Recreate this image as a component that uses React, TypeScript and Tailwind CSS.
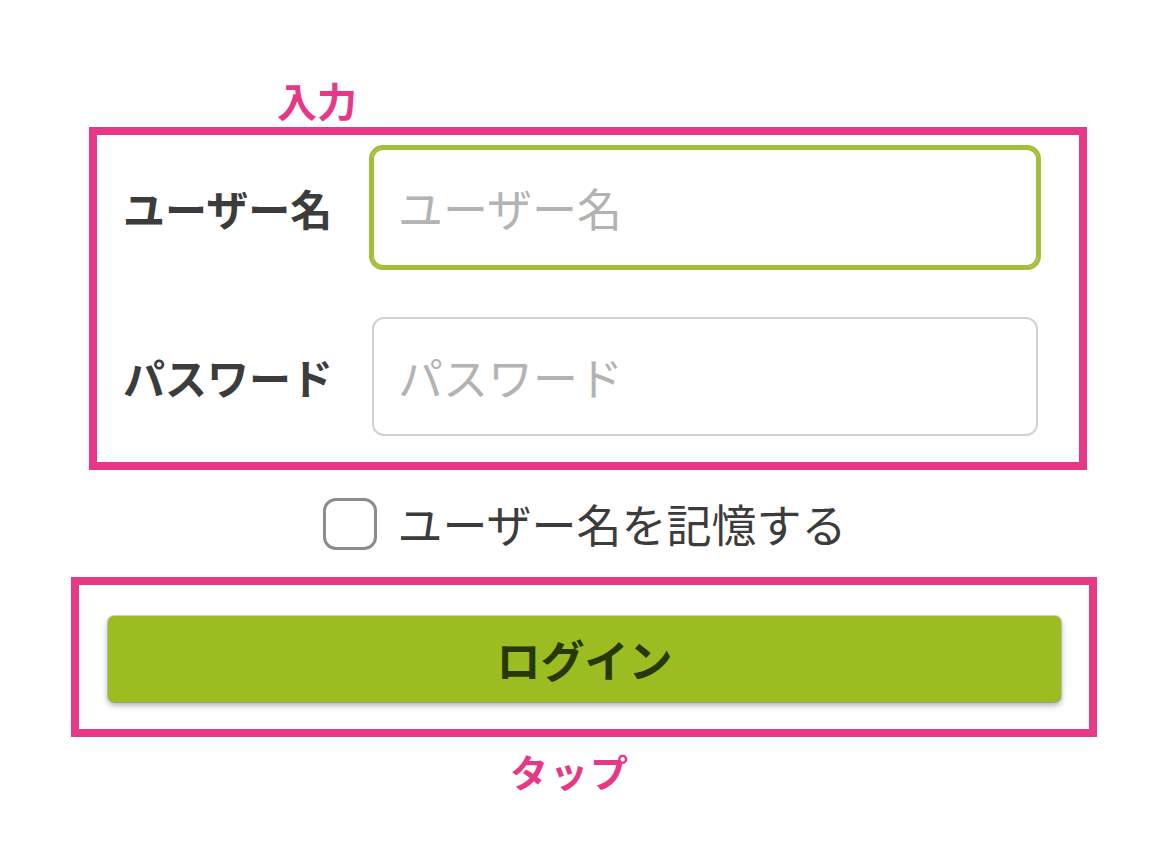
import React from 'react';

const jp = { fontFamily: '"Noto Sans CJK JP", "Noto Sans", sans-serif' };

export default function App() {
  return (
    <div className="w-[1170px] h-[866px] bg-white flex flex-col" style={jp}>
      {/* 入力 */}
      <div className="pl-[277px] pt-[76px] h-[127px] text-[40px] leading-[48px] font-bold text-[#e63887]">
        入力
      </div>
      <div className="ml-[89px] w-[998px] h-[343px] border-[8px] border-[#e63887] pl-[26px] pr-[41px] pt-[13px]">
        <div className="grid grid-cols-[249px_1fr] gap-y-[50px] items-center">
          <label className="text-[42px] font-bold text-[#3c3c3c] leading-none">ユーザー名</label>
          <div className="h-[119px] rounded-[11px] border-[2px] border-[#a2be3a] outline-[3px] outline-[#a2be3a] flex items-center pl-[24px] text-[45px] text-[#b3b3b3]">
            ユーザー名
          </div>
          <label className="text-[42px] font-bold text-[#3c3c3c] leading-none">パスワード</label>
          <div className="h-[119px] rounded-[12px] border-[2px] border-[#d2d2d2] flex items-center pl-[24px] text-[45px] text-[#b3b3b3]">
            パスワード
          </div>
        </div>
      </div>

      {/* Remember checkbox */}
      <div className="h-[107px] flex items-center justify-center gap-[20px]">
        <span className="w-[54px] h-[52px] rounded-[13px] border-[3px] border-[#8c8c8c] bg-white" />
        <span className="text-[45px] text-[#3c3c3c] leading-none">ユーザー名を記憶する</span>
      </div>

      {/* タップ */}
      <div className="ml-[71px] w-[1026px] h-[160px] border-[8px] border-[#e63887] pl-[29px] pr-[28px] pt-[31px]">
        <button className="w-full h-[86px] rounded-[6px] bg-[#9bbd22] shadow-[0_0_0_1px_rgba(0,0,0,0.15),0_3px_6px_rgba(0,0,0,0.35)] text-[44px] font-bold text-[#283808] leading-none">
          ログイン
        </button>
      </div>
      <div className="pl-[510px] pt-[10px] text-[38px] leading-[48px] font-bold text-[#e63887] tracking-[2px]">
        タップ
      </div>
    </div>
  );
}
